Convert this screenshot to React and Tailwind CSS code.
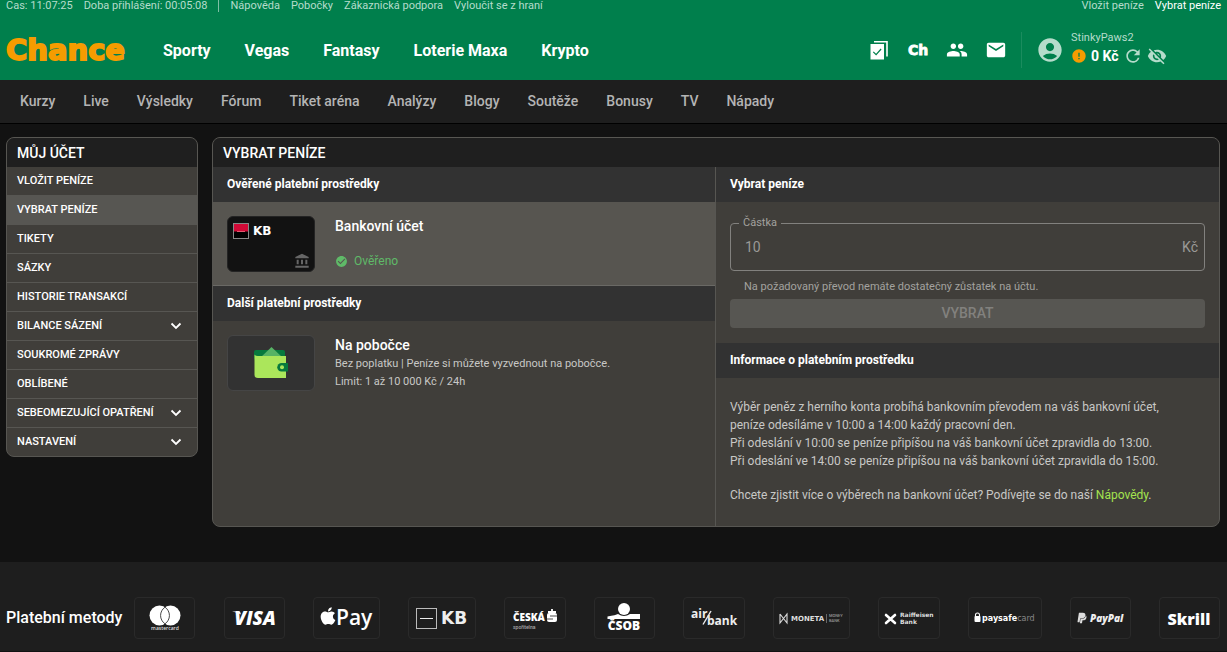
import React from "react";
import {
  MdPeople,
  MdMail,
  MdAccountCircle,
  MdRefresh,
  MdVisibilityOff,
  MdError,
  MdCheckCircle,
  MdAccountBalance,
} from "react-icons/md";
import { FaApple, FaPaypal } from "react-icons/fa";

const topLinks = ["Nápověda", "Pobočky", "Zákaznická podpora", "Vyloučit se z hraní"];
const mainLinks = ["Sporty", "Vegas", "Fantasy", "Loterie Maxa", "Krypto"];
const subLinks = ["Kurzy", "Live", "Výsledky", "Fórum", "Tiket aréna", "Analýzy", "Blogy", "Soutěže", "Bonusy", "TV", "Nápady"];
const menu = [
  { label: "VLOŽIT PENÍZE" },
  { label: "VYBRAT PENÍZE", active: true },
  { label: "TIKETY" },
  { label: "SÁZKY" },
  { label: "HISTORIE TRANSAKCÍ" },
  { label: "BILANCE SÁZENÍ", more: true },
  { label: "SOUKROMÉ ZPRÁVY" },
  { label: "OBLÍBENÉ" },
  { label: "SEBEOMEZUJÍCÍ OPATŘENÍ", more: true },
  { label: "NASTAVENÍ", more: true },
];

function Brand() {
  return (
    <svg width="130" height="36" viewBox="0 0 130 36" role="img" aria-label="Chance">
      <text x="0" y="28" fontFamily="DejaVu Sans" fontWeight="700" fontSize="29" fill="#f59c00" stroke="#f59c00" strokeWidth="1.8">
        Chance
      </text>
    </svg>
  );
}

function TicketIcon() {
  return (
    <svg width="18" height="19" viewBox="0 0 18 19">
      <path d="M4 0.8H17V15.5" fill="none" stroke="#fff" strokeWidth="1.6" />
      <rect x="0.5" y="3" width="13.5" height="15.5" fill="#fff" />
      <path d="M3.3 10.8l2.8 2.8 5-5.6" fill="none" stroke="#007f4c" strokeWidth="1.2" />
    </svg>
  );
}

function Chevron() {
  return (
    <svg width="12" height="8" viewBox="0 0 12 8" fill="none" stroke="#fff" strokeWidth="1.8">
      <path d="M1.5 1.5L6 6l4.500-4.500" />
    </svg>
  );
}

function Wallet() {
  return (
    <svg width="36" height="34" viewBox="0 0 36 34">
      <rect x="1" y="4" width="31" height="10" rx="2" fill="#077a3d" />
      <path d="M7 12L18.500 1 30 12z" fill="#56b365" />
      <path d="M1.500 8.500Q2.500 10 5 10H33V32H5Q1.500 32 1.500 29z" fill="#abe65b" />
      <path d="M28.500 17H35V25.500H28.500a4.250 4.250 0 010-8.500z" fill="#077a3d" />
      <circle cx="29" cy="21.200" r="2" fill="#abe65b" />
    </svg>
  );
}

function KbCard() {
  return (
    <div className="flex h-14 w-[88px] shrink-0 flex-col justify-between rounded-md border border-[#242424] bg-[#121212] px-1 pt-1 pb-0.5">
      <svg width="48" height="20" viewBox="0 0 48 20" role="img" aria-label="KB">
        <rect x="1.500" y="2.500" width="15" height="15" fill="#000" stroke="#888" />
        <rect x="2" y="3" width="14" height="7.500" fill="#d10a37" />
        <path d="M5 10.500h8" stroke="#e05a70" />
        <text x="21" y="14" fontFamily="DejaVu Sans" fontWeight="700" fontSize="12" fill="#fff">KB</text>
      </svg>
      <MdAccountBalance className="self-end text-[#666]" size={16} />
    </div>
  );
}

const sans = "Open Sans";
const methods = [
  {
    name: "mastercard",
    box: "w-[61px]",
    width: 34,
    art: (
      <>
        <circle cx="11.500" cy="12.500" r="10" fill="#fff" />
        <circle cx="22.500" cy="12.500" r="10" fill="#fff" />
        <path d="M17 4.200a10 10 0 010 16.600a10 10 0 010-16.600z" fill="#fff" stroke="#333" strokeWidth="0.900" />
        <text x="17" y="27" textAnchor="middle" fontFamily={sans} fontWeight="600" fontSize="5" fill="#ddd">mastercard</text>
      </>
    ),
  },
  {
    name: "Visa",
    box: "w-[61px]",
    width: 46,
    art: (
      <>
        <text x="24" y="22" textAnchor="middle" fontFamily={sans} fontWeight="800" fontStyle="italic" fontSize="19" fill="#fff">VISA</text>
        <path d="M1 8.500h8l1 3q-3-2-9-3z" fill="#fff" />
      </>
    ),
  },
  {
    name: "Apple Pay",
    box: "w-[67px]",
    width: 56,
    art: (
      <>
        <FaApple x="0" y="3" size={20} color="#fff" />
        <text x="18" y="22" fontFamily="Open Sans" fontWeight="600" fontSize="21" fill="#fff">Pay</text>
      </>
    ),
  },
  {
    name: "KB",
    box: "w-[68px]",
    width: 54,
    art: (
      <>
        <rect x="1.500" y="5.500" width="20" height="20" fill="none" stroke="#bbb" />
        <path d="M5 15.500h13" stroke="#eee" />
        <text x="26" y="21" fontFamily="DejaVu Sans" fontWeight="700" fontSize="17" fill="#eee">KB</text>
      </>
    ),
  },
  {
    name: "Česká spořitelna",
    box: "w-[62px]",
    width: 46,
    art: (
      <>
        <text x="1" y="18" fontFamily={sans} fontWeight="800" fontSize="10" fill="#fff">ČESKÁ</text>
        <text x="1" y="26" fontFamily="Roboto" fontWeight="500" fontSize="5" fill="#aaa">spořitelna</text>
        <path d="M36 9h8M40 6v3" stroke="#fff" strokeWidth="1.800" />
        <rect x="35" y="10" width="10" height="9" rx="2" fill="#fff" />
        <path d="M38 13h7M35 16h6" stroke="#1e1e1e" strokeWidth="0.800" />
      </>
    ),
  },
  {
    name: "ČSOB",
    box: "w-[61px]",
    width: 36,
    art: (
      <>
        <circle cx="18" cy="6" r="6" fill="#fff" />
        <path d="M1.500 16V13.500Q10 12 12 11Q18 15 24 11H34V16z" fill="#fff" />
        <text x="18" y="27" textAnchor="middle" fontFamily={sans} fontWeight="800" fontSize="12" fill="#fff">ČSOB</text>
      </>
    ),
  },
  {
    name: "Air bank",
    box: "w-[62px]",
    width: 50,
    art: (
      <>
        <text x="2" y="15" fontFamily={sans} fontWeight="700" fontSize="12" fill="#eee">air</text>
        <path d="M14 21.500L22 8" stroke="#eee" strokeWidth="1.400" />
        <text x="18" y="22" fontFamily={sans} fontWeight="700" fontSize="12" fill="#eee">bank</text>
      </>
    ),
  },
  {
    name: "Moneta Money Bank",
    box: "w-[77px]",
    width: 66,
    art: (
      <>
        <path d="M2 11v9l7-9v9l-7-9M9 11l-7 9" fill="none" stroke="#ddd" strokeWidth="1.100" />
        <text x="13" y="18" fontFamily="DejaVu Sans" fontWeight="700" fontSize="7" fill="#ddd">MONETA</text>
        <path d="M48.500 11v9" stroke="#666" />
        <text x="51" y="14" fontFamily="Roboto" fontWeight="500" fontSize="4" fill="#999">MONEY</text>
        <text x="51" y="19" fontFamily="Roboto" fontWeight="500" fontSize="4" fill="#999">BANK</text>
      </>
    ),
  },
  {
    name: "Raiffeisen Bank",
    box: "w-[62px]",
    width: 52,
    art: (
      <>
        <path d="M3 12l9 8M12 12l-9 8" stroke="#fff" strokeWidth="2.600" strokeLinecap="round" />
        <text x="17" y="14" fontFamily="DejaVu Sans" fontWeight="700" fontSize="6" fill="#ddd">Raiffeisen</text>
        <text x="17" y="21" fontFamily="DejaVu Sans" fontWeight="700" fontSize="6" fill="#ddd">Bank</text>
      </>
    ),
  },
  {
    name: "paysafecard",
    box: "w-[74px]",
    width: 64,
    art: (
      <>
        <path d="M2.500 14v-2a2 2 0 014 0v2" fill="none" stroke="#fff" strokeWidth="1.100" />
        <rect x="1.500" y="13" width="6" height="6" rx="1" fill="#fff" />
        <text x="9" y="18" fontFamily="DejaVu Sans" fontWeight="700" fontSize="8" fill="#fff">
          paysafe<tspan fontWeight="400" fill="#888">card</tspan>
        </text>
      </>
    ),
  },
  {
    name: "PayPal",
    box: "w-[61px]",
    width: 50,
    art: (
      <>
        <FaPaypal x="1" y="9" size={12} color="#ddd" />
        <text x="15" y="19" fontFamily="Open Sans" fontWeight="800" fontStyle="italic" fontSize="10" fill="#eee">PayPal</text>
      </>
    ),
  },
  {
    name: "Skrill",
    box: "w-[61px]",
    width: 46,
    art: (
      <text x="23" y="22" textAnchor="middle" fontFamily={sans} fontWeight="800" fontSize="16" fill="#fff">Skrill</text>
    ),
  },
];

function SectionTitle({ children }) {
  return (
    <h2 className="bg-[#323232] px-3.5 py-2 text-[12px] leading-[19px] font-bold text-white">{children}</h2>
  );
}

export default function App() {
  return (
    <div className="min-h-screen bg-[#121212] font-['Roboto',sans-serif] text-white">
      <header className="bg-[#007f4c] pb-3">
        <div className="flex items-center justify-between px-1.5 text-[11px] leading-3 text-[#b5dccb]">
          <div className="flex items-center gap-[11px]">
            <span>Čas: 11:07:25</span>
            <span>Doba přihlášení: 00:05:08</span>
            <span className="h-3 w-px bg-[#7fbfa5]" />
            {topLinks.map((l) => (
              <a key={l} href="#">{l}</a>
            ))}
          </div>
          <div className="flex gap-[11px]">
            <a href="#">Vložit peníze</a>
            <a href="#" className="text-white">Vybrat peníze</a>
          </div>
        </div>
        <div className="mt-5 flex h-9 items-center px-1.5">
          <a href="#" className="mr-[27px]"><Brand /></a>
          <nav className="flex flex-1 gap-[34px] pt-0.5 text-[16px] leading-5 font-bold">
            {mainLinks.map((l) => (
              <a key={l} href="#">{l}</a>
            ))}
          </nav>
          <div className="mr-1.5 flex">
            <button aria-label="Tikety" className="flex w-[39px] items-center justify-center"><TicketIcon /></button>
            <button aria-label="Chance klub" className="flex w-[39px] items-center justify-center">
              <svg width="24" height="20" viewBox="0 0 24 20">
                <text x="12" y="15" textAnchor="middle" fontFamily="DejaVu Sans" fontWeight="700" fontSize="14" fill="#fff" stroke="#fff" strokeWidth="0.800">Ch</text>
              </svg>
            </button>
            <button aria-label="Přátelé" className="flex w-[39px] items-center justify-center"><MdPeople size={22} /></button>
            <button aria-label="Zprávy" className="flex w-[39px] items-center justify-center"><MdMail size={22} /></button>
          </div>
          <div className="flex h-9 w-[200px] items-center gap-[7px] border-l border-[#1a8c5e] pl-3.5">
            <MdAccountCircle size={28} className="shrink-0 text-[#b5dccb]" />
            <div className="pb-1">
              <div className="text-[11px] leading-4 text-[#b5dccb]">StinkyPaws2</div>
              <div className="flex h-5 items-center gap-1 text-[14px] font-bold">
                <MdError size={16} className="text-[#f59c00]" />
                <span>0 Kč</span>
                <button aria-label="Obnovit" className="text-[#b5dccb]"><MdRefresh size={20} /></button>
                <button aria-label="Skrýt zůstatek" className="text-[#b5dccb]"><MdVisibilityOff size={20} /></button>
              </div>
            </div>
          </div>
        </div>
      </header>

      <nav className="flex gap-7 border-b border-black bg-[#1e1e1e] px-5 pt-[11px] pb-3 text-[14px] leading-5 font-medium text-[#b4b4b4]">
        {subLinks.map((l) => (
          <a key={l} href="#">{l}</a>
        ))}
      </nav>

      <main className="flex items-start gap-3.5 pt-[13px] pr-[7px] pb-[35px] pl-1.5">
        <aside className="w-48 shrink-0 overflow-hidden rounded-lg border border-[#575652] bg-[#403e3a]">
          <h2 className="bg-[#1f1f1f] px-2.5 pt-[5px] pb-1 text-[14px] leading-5 font-medium">MŮJ ÚČET</h2>
          <ul className="text-[11px] leading-7 font-medium">
            {menu.map((m) => (
              <li key={m.label} className="border-b border-[#575652] last:border-b-0">
                <a
                  href="#"
                  className={
                    m.active
                      ? "flex items-center justify-between bg-[#575652] pr-[15px] pl-2.5"
                      : "flex items-center justify-between pr-[15px] pl-2.5"
                  }
                >
                  {m.label}
                  {m.more && <Chevron />}
                </a>
              </li>
            ))}
          </ul>
        </aside>

        <section className="flex-1 overflow-hidden rounded-lg border border-[#575652] bg-[#403e3a]">
          <h1 className="bg-[#1f1f1f] px-2.5 pt-[5px] pb-1 text-[14px] leading-5 font-medium">VYBRAT PENÍZE</h1>
          <div className="grid grid-cols-2">
            <div className="border-r border-[#575652]">
              <SectionTitle>Ověřené platební prostředky</SectionTitle>
              <div className="flex gap-5 border-b border-[#6a6965] bg-[#575550] px-3.5 pt-3.5 pb-[13px]">
                <KbCard />
                <div>
                  <h3 className="text-[14px] leading-5 font-medium">Bankovní účet</h3>
                  <p className="mt-[15px] flex items-center gap-1.5 text-[12px] leading-5 text-[#5fba68]">
                    <MdCheckCircle size={13} />
                    Ověřeno
                  </p>
                </div>
              </div>
              <SectionTitle>Další platební prostředky</SectionTitle>
              <div className="flex gap-5 px-3.5 py-3.5">
                <div className="flex h-14 w-[88px] shrink-0 items-center justify-center rounded-md border border-[#454545] bg-[#323232]">
                  <Wallet />
                </div>
                <div className="text-[11px] leading-[18px] text-[#c8c8c6]">
                  <h3 className="text-[14px] leading-5 font-medium text-white">Na pobočce</h3>
                  <p>Bez poplatku | Peníze si můžete vyzvednout na pobočce.</p>
                  <p>Limit: 1 až 10 000 Kč / 24h</p>
                </div>
              </div>
            </div>

            <div>
              <SectionTitle>Vybrat peníze</SectionTitle>
              <form className="px-3.5 pt-3.5 pb-[15px]">
                <fieldset className="rounded-sm border border-[#82817e] pr-1.5 pl-2">
                  <legend className="px-1 text-[11px] leading-[14px] text-[#a3a29f]">
                    <label htmlFor="amount">Částka</label>
                  </legend>
                  <div className="flex h-10 items-center pb-1.5 text-[14px] text-[#9a9996]">
                    <input id="amount" type="text" defaultValue="10" className="w-full min-w-0 flex-1 bg-transparent px-1.5 outline-none" />
                    <span>Kč</span>
                  </div>
                </fieldset>
                <p className="mt-2 px-3.5 text-[11px] leading-4 text-[#a3a29f]">Na požadovaný převod nemáte dostatečný zůstatek na účtu.</p>
                <button type="button" className="mt-1 h-[29px] w-full rounded-sm bg-[#575652] text-[14px] font-medium text-[#82817e]">VYBRAT</button>
              </form>
              <SectionTitle>Informace o platebním prostředku</SectionTitle>
              <div className="px-3.5 pt-5 pb-[22px] text-[12px] leading-[18px] text-[#c8c8c6]">
                <p>
                  Výběr peněz z herního konta probíhá bankovním převodem na váš bankovní účet,
                  <br />
                  peníze odesíláme v 10:00 a 14:00 každý pracovní den.
                  <br />
                  Při odeslání v 10:00 se peníze připíšou na váš bankovní účet zpravidla do 13:00.
                  <br />
                  Při odeslání ve 14:00 se peníze připíšou na váš bankovní účet zpravidla do 15:00.
                </p>
                <p className="mt-4">
                  Chcete zjistit více o výběrech na bankovní účet? Podívejte se do naší{" "}
                  <a href="#" className="text-[#a4e34f]">Nápovědy</a>.
                </p>
              </div>
            </div>
          </div>
        </section>
      </main>

      <footer className="flex items-center justify-between bg-[#1e1e1e] pt-[35px] pr-[7px] pb-3 pl-1.5">
        <h2 className="text-[16px] leading-5 font-medium">Platební metody</h2>
        <ul className="ml-3 flex flex-1 justify-between">
          {methods.map((m) => (
            <li key={m.name} className={`${m.box} flex h-[42px] items-center justify-center rounded-sm border border-[#2a2a2a]`}>
              <svg width={m.width} height="34" viewBox={`0 -2 ${m.width} 34`} role="img" aria-label={m.name}>
                {m.art}
              </svg>
            </li>
          ))}
        </ul>
      </footer>
    </div>
  );
}
